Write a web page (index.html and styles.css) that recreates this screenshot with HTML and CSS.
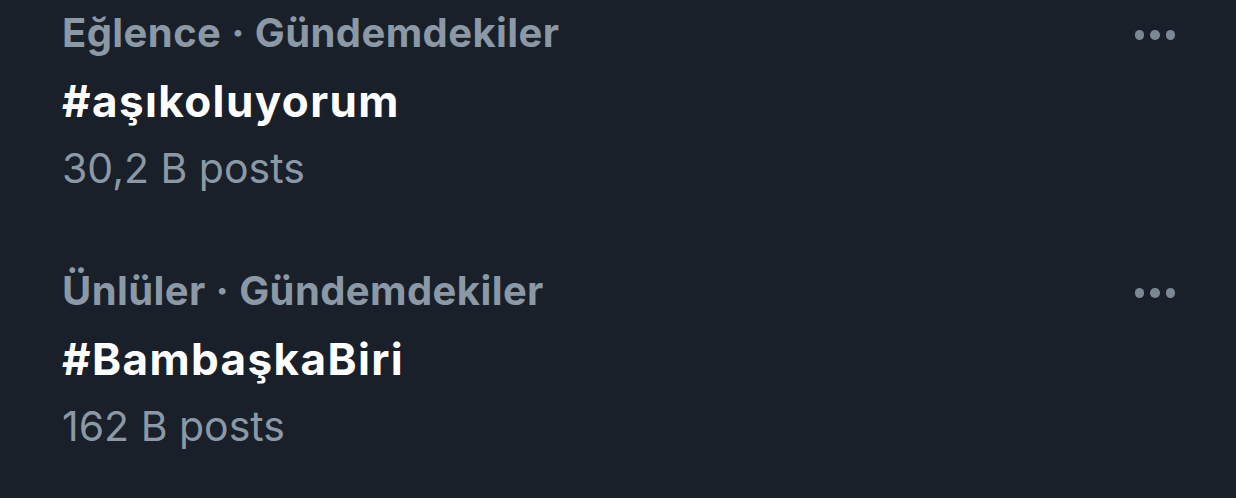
FILE: index.html
```html
<!DOCTYPE html>
<html lang="tr">
<head>
<meta charset="utf-8" />
<title>Gündemdekiler</title>
<link rel="stylesheet" href="styles.css">
</head>
<body>
  <div class="trends">
    <div class="trend">
      <div class="info">
        <div class="meta">Eğlence · Gündemdekiler</div>
        <div class="tag">#aşıkoluyorum</div>
        <div class="count">30,2 B posts</div>
      </div>
      <div class="more"><span></span><span></span><span></span></div>
    </div>
    <div class="trend">
      <div class="info">
        <div class="meta">Ünlüler · Gündemdekiler</div>
        <div class="tag">#BambaşkaBiri</div>
        <div class="count">162 B posts</div>
      </div>
      <div class="more"><span></span><span></span><span></span></div>
    </div>
  </div>
</body>
</html>
```
FILE: styles.css
```css
html, body {
    height: 100%;
}

body {
    margin: 0;
    background: #19202a;
    font-family: Inter, Roboto, "Noto Sans", sans-serif;
    color: #8b98a5;
}

.trends {
    padding-left: 62px;
}

.trend {
    display: flex;
    justify-content: space-between;
    height: 258px;
}

.meta {
    font-size: 40px;
    font-weight: 700;
    line-height: 66px;
    letter-spacing: 0.4px;
}

.tag {
    margin-top: 4px;
    font-size: 44px;
    font-weight: 700;
    line-height: 62px;
    letter-spacing: 1.4px;
    color: #ffffff;
}

.count {
    font-size: 41px;
    line-height: 72px;
}

.more {
    display: flex;
    gap: 6px;
    padding: 30px 61px 0 0;
}

.more span {
    width: 9.5px;
    height: 9.5px;
    border-radius: 50%;
    background: #7c8794;
}
```
